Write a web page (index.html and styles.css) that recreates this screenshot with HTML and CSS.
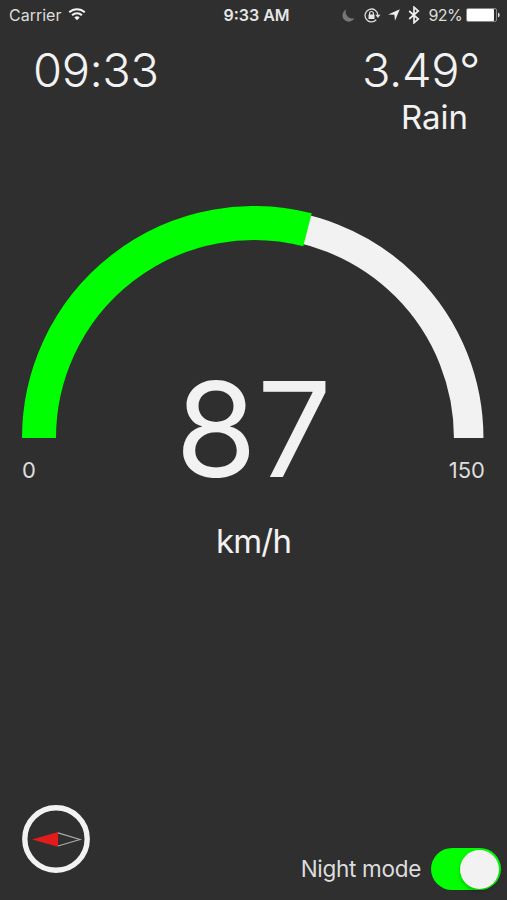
FILE: index.html
```html
<!DOCTYPE html>
<html lang="en">
<head>
<meta charset="utf-8">
<title>Speedometer</title>
<link rel="stylesheet" href="styles.css">
</head>
<body>
<div class="screen">
  <header class="status">
    <div class="status-left">
      <span class="carrier">Carrier</span>
      <svg class="wifi" width="18" height="14" viewBox="0 0 18 14">
        <g fill="none" stroke="#f2f2f2" stroke-width="2">
          <path d="M1.2 5.3a11.2 11.2 0 0 1 15.6 0"/>
          <path d="M4.1 8.3a7 7 0 0 1 9.8 0"/>
        </g>
        <path d="M6.3 10.5a3.9 3.9 0 0 1 5.4 0L9 13.2z" fill="#f2f2f2"/>
      </svg>
    </div>
    <span class="status-time">9:33 AM</span>
    <div class="status-right">
      <svg class="moon" width="13" height="13" viewBox="0 0 13 13">
        <path d="M4.2.6a6.3 6.3 0 1 0 8.3 8.4A6.4 6.4 0 0 1 4.2.6z" fill="#777"/>
      </svg>
      <svg class="lock" width="17" height="15" viewBox="0 0 17 15">
        <path d="M12.2 11.8A6.4 6.4 0 1 1 13.9 7.3" fill="none" stroke="#ddd" stroke-width="1.3"/>
        <path d="M11.3 6.8h5.2l-2.6 3.1z" fill="#ddd"/>
        <path d="M5.6 7V5.4a1.9 1.9 0 0 1 3.8 0V7" fill="none" stroke="#e6e6e6" stroke-width="1.2"/>
        <rect x="4.5" y="6.4" width="6" height="4.6" rx=".5" fill="#e6e6e6"/>
      </svg>
      <svg class="arrow" width="12" height="12" viewBox="0 0 12 12">
        <path d="M11.8.2 7 11.8 6.4 5.8.2 5.4z" fill="#eee"/>
      </svg>
      <svg class="bluetooth" width="12" height="18" viewBox="0 0 12 18">
        <path d="M1.2 5 10.3 13 6 16.8V1.2L10.3 5 1.2 13" fill="none" stroke="#eee" stroke-width="1.7"/>
      </svg>
      <span class="percent">92%</span>
      <svg class="battery" width="34" height="14" viewBox="0 0 34 14">
        <rect x=".5" y=".5" width="30" height="13" rx="1.5" fill="none" stroke="#888"/>
        <rect x="1" y="1" width="27" height="12" rx=".8" fill="#fff"/>
        <path d="M32 4.6q1.7.8 1.7 2.4T32 9.4z" fill="#ddd"/>
      </svg>
    </div>
  </header>

  <section class="top">
    <div class="clock">09:33</div>
    <div class="weather">
      <div class="temperature">3.49°</div>
      <div class="condition">Rain</div>
    </div>
  </section>

  <main class="dial">
    <svg class="gauge" width="464" height="232" viewBox="0 0 464 232">
      <path d="M17.3 232a214.7 214.7 0 0 1 429.4 0" fill="none" stroke="#f2f2f2" stroke-width="29.5"/>
      <path d="M17 232A215 215 0 0 1 285.5 23.8" fill="none" stroke="#0f0" stroke-width="34"/>
    </svg>
    <div class="speed">87</div>
    <div class="scale"><span>0</span><span>150</span></div>
    <div class="unit">km/h</div>
  </main>

  <footer class="bottom">
    <svg class="compass" width="68" height="68" viewBox="0 0 68 68">
      <circle cx="34" cy="34" r="31.2" fill="none" stroke="#f2f2f2" stroke-width="5.4"/>
      <path d="M36 27.9 58 34.5 36 41" fill="none" stroke="#aaa" stroke-width="1.2"/>
      <path d="M10 34.5 36 27v14.8z" fill="#e31b1b"/>
    </svg>
    <div class="night">
      <span class="night-label">Night mode</span>
      <div class="switch"><div class="knob"></div></div>
    </div>
  </footer>
</div>
</body>
</html>
```
FILE: styles.css
```css
* { box-sizing: border-box; }

body {
  margin: 0;
  background: #2f2f2f;
  color: #f2f2f2;
  font-family: Inter, "Liberation Sans", sans-serif;
}

svg { display: block; flex: none; }

.screen {
  width: 507px;
  height: 900px;
  display: flex;
  flex-direction: column;
  overflow: hidden;
}

.status {
  height: 30px;
  display: grid;
  grid-template-columns: 1fr auto 1fr;
  align-items: center;
  padding: 0 7px 0 9px;
  font-size: 16px;
  line-height: 30px;
  white-space: nowrap;
}

.status-left, .status-right { display: flex; align-items: center; }
.status-right { justify-content: flex-end; }
.carrier { color: #ddd; }
.wifi { margin-left: 7px; margin-top: -2px; }
.status-time { font-weight: 600; color: #e6e6e6; margin-left: 4px; }
.moon { margin-right: 9px; }
.arrow { margin-left: 7px; }
.bluetooth { margin-left: 8px; }
.percent { margin-left: 8px; color: #ddd; letter-spacing: -0.6px; }
.battery { margin-left: 4px; }

.top {
  height: 176px;
  display: flex;
  justify-content: space-between;
  padding: 19px 27px 0 33px;
}

.clock, .temperature {
  font-size: 47px;
  line-height: 41px;
  font-weight: 350;
  letter-spacing: -0.4px;
}

.weather { text-align: right; }
.condition {
  font-size: 33px;
  line-height: 40px;
  margin-top: 7px;
  padding-right: 12px;
}

.dial {
  display: flex;
  flex-direction: column;
  align-items: center;
}

.speed {
  height: 100px;
  margin-top: -59px;
  font-size: 132px;
  line-height: 100px;
}

.scale {
  align-self: stretch;
  display: flex;
  justify-content: space-between;
  padding: 0 22px;
  margin-top: -22px;
  font-size: 22px;
  line-height: 26px;
  color: #ddd;
}

.unit {
  margin-top: 38px;
  font-size: 33px;
  line-height: 40px;
  letter-spacing: -0.8px;
}

.bottom {
  margin-top: auto;
  height: 95px;
  display: flex;
  justify-content: space-between;
  align-items: flex-start;
  padding: 0 6px 0 22px;
}

.night {
  display: flex;
  align-items: center;
  gap: 10px;
  margin-top: 43px;
}

.night-label { font-size: 22.5px; line-height: 42px; color: #ddd; letter-spacing: -0.3px; }

.switch {
  width: 70px;
  height: 42px;
  border-radius: 21px;
  background: #0f0;
  display: flex;
  justify-content: flex-end;
  align-items: center;
  padding-right: 2px;
}

.knob {
  width: 39px;
  height: 39px;
  border-radius: 50%;
  background: #f2f2f2;
  box-shadow: 0 2px 4px rgba(0, 0, 0, .25);
}
```
